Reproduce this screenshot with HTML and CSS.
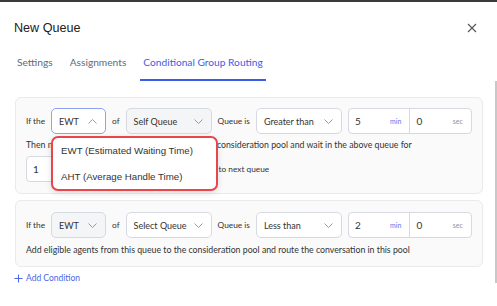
FILE: index.html
```html
<!DOCTYPE html>
<html lang="en">
<head>
    <meta charset="UTF-8">
    <meta name="viewport" content="width=device-width, initial-scale=1.0">
    <title>New Queue</title>
    <link rel="stylesheet" href="styles.css">
</head>
<body>
    <div class="topbar"></div>
    <div class="modal">
        <header class="modal-head">
            <h1>New Queue</h1>
            <button class="close" aria-label="Close">
                <svg width="10" height="10" viewBox="0 0 10 10"><path d="M1 1L9 9M9 1L1 9" stroke="#555" stroke-width="1.1" fill="none"/></svg>
            </button>
        </header>

        <nav class="tabs">
            <span class="tab">Settings</span>
            <span class="tab">Assignments</span>
            <span class="tab active">Conditional Group Routing</span>
        </nav>

        <div class="content">
            <div class="main">
                <div class="rule">
                    <div class="row">
                        <span class="label">If the</span>
                        <div class="select-wrap">
                            <div class="select metric focused">
                                <span>EWT</span>
                                <svg class="chev" width="9" height="5" viewBox="0 0 9 5"><path d="M0.5 4.5L4.5 0.5L8.5 4.5" stroke="#8a90a0" stroke-width="0.9" fill="none"/></svg>
                            </div>
                            <ul class="dropdown">
                                <li>EWT (Estimated Waiting Time)</li>
                                <li>AHT (Average Handle Time)</li>
                            </ul>
                        </div>
                        <span class="label">of</span>
                        <div class="select queue">
                            <span>Self Queue</span>
                            <svg class="chev" width="9" height="5" viewBox="0 0 9 5"><path d="M0.5 0.5L4.5 4.5L8.5 0.5" stroke="#8a90a0" stroke-width="0.9" fill="none"/></svg>
                        </div>
                        <span class="label">Queue is</span>
                        <div class="select compare">
                            <span>Greater than</span>
                            <svg class="chev" width="9" height="5" viewBox="0 0 9 5"><path d="M0.5 0.5L4.5 4.5L8.5 0.5" stroke="#8a90a0" stroke-width="0.9" fill="none"/></svg>
                        </div>
                        <div class="duration">
                            <div class="part"><span class="num">5</span><span class="unit min">min</span></div>
                            <div class="part"><span class="num">0</span><span class="unit">sec</span></div>
                        </div>
                    </div>
                    <p class="text">Then move eligible agents from this queue to this consideration pool and wait in the above queue for</p>
                    <div class="row">
                        <div class="box"><span class="num">1</span></div>
                        <div class="select small"><span>min</span></div>
                        <span class="label">before moving to next queue</span>
                    </div>
                </div>

                <div class="rule">
                    <div class="row">
                        <span class="label">If the</span>
                        <div class="select metric">
                            <span>EWT</span>
                            <svg class="chev" width="9" height="5" viewBox="0 0 9 5"><path d="M0.5 0.5L4.5 4.5L8.5 0.5" stroke="#8a90a0" stroke-width="0.9" fill="none"/></svg>
                        </div>
                        <span class="label">of</span>
                        <div class="select queue white">
                            <span>Select Queue</span>
                            <svg class="chev" width="9" height="5" viewBox="0 0 9 5"><path d="M0.5 0.5L4.5 4.5L8.5 0.5" stroke="#8a90a0" stroke-width="0.9" fill="none"/></svg>
                        </div>
                        <span class="label">Queue is</span>
                        <div class="select compare">
                            <span>Less than</span>
                            <svg class="chev" width="9" height="5" viewBox="0 0 9 5"><path d="M0.5 0.5L4.5 4.5L8.5 0.5" stroke="#8a90a0" stroke-width="0.9" fill="none"/></svg>
                        </div>
                        <div class="duration">
                            <div class="part"><span class="num">2</span><span class="unit min">min</span></div>
                            <div class="part"><span class="num">0</span><span class="unit">sec</span></div>
                        </div>
                    </div>
                    <p class="text">Add eligible agents from this queue to the consideration pool and route the conversation in this pool</p>
                </div>

                <a class="add" href="#">
                    <svg width="9" height="9" viewBox="0 0 9 9"><path d="M4.5 0.5V8.5M0.5 4.5H8.5" stroke="#4a67e8" stroke-width="1" fill="none"/></svg>
                    Add Condition
                </a>
            </div>
            <div class="scrollbar"></div>
        </div>
    </div>
</body>
</html>
```

FILE: styles.css
```css
* {
    margin: 0;
    padding: 0;
    box-sizing: border-box;
}

body {
    font-family: 'Lato', sans-serif;
    background: #fff;
    color: #333;
    width: 497px;
    height: 306px;
    overflow: hidden;
}

.topbar {
    height: 2px;
    background: #3a3a3a;
}

.modal {
    display: flex;
    flex-direction: column;
}

.modal-head {
    display: flex;
    justify-content: space-between;
    align-items: center;
    height: 52px;
    padding: 0 20px 0 14px;
}

.modal-head h1 {
    font-family: 'Liberation Sans', Arial, sans-serif;
    font-weight: 400;
    font-size: 12.6px;
    color: #222;
}

.close {
    background: none;
    border: none;
    display: flex;
}

.tabs {
    display: flex;
    padding-left: 14px;
    height: 27px;
}

.tab {
    font-size: 10.2px;
    color: #636a78;
    padding: 2px 3px 0;
    height: 27px;
    margin-right: 11px;
    white-space: nowrap;
}

.tab.active {
    color: #3d5ce8;
    border-bottom: 2px solid #3d5ce8;
}

.content {
    display: flex;
    flex: 1;
    height: 225px;
}

.main {
    flex: 1;
    padding: 16px 12px 0 15px;
}

.scrollbar {
    width: 4px;
    background: #c8c8c8;
}

.rule {
    background: #fafafa;
    border: 1px solid #e9eaee;
    border-radius: 6px;
    padding: 10px 10px 11px;
    margin-bottom: 6px;
}

.rule + .rule {
    padding-top: 11px;
    padding-bottom: 11px;
}

.rule + .rule .text {
    margin: 6px 0 0;
}

.row {
    display: flex;
    align-items: center;
    gap: 6px;
}

.label {
    font-size: 8.3px;
    color: #333;
    white-space: nowrap;
}

.text {
    font-size: 8.75px;
    color: #333;
    line-height: 11px;
    margin: 5px 0 6px;
    white-space: nowrap;
}

.select-wrap {
    position: relative;
}

.select {
    display: flex;
    align-items: center;
    justify-content: space-between;
    height: 26px;
    border: 1px solid #d6d9e1;
    border-radius: 5px;
    background: #fff;
    padding: 0 8px 0 7px;
    font-size: 9px;
    color: #333;
    white-space: nowrap;
}

.select.metric {
    width: 55px;
    background: #f4f5f7;
}

.select.focused {
    border-color: #8ea2f2;
    background: #fff;
}

.select.queue {
    width: 86px;
    background: #f4f5f7;
}

.select.queue.white {
    background: #fff;
}

.select.compare {
    width: 86px;
}

.select.small {
    width: 86px;
}

.duration {
    display: flex;
    width: 124px;
    height: 26px;
    border: 1px solid #d6d9e1;
    border-radius: 4px;
    background: #fff;
}

.part {
    flex: 1;
    display: flex;
    align-items: center;
    justify-content: space-between;
    padding: 0 8px 0 6px;
}

.part + .part {
    border-left: 1px solid #d6d9e1;
}

.num {
    font-size: 10px;
    color: #333;
}

.unit {
    font-size: 7px;
    color: #8b92a2;
}

.unit.min {
    color: #5a78e6;
}

.box {
    display: flex;
    align-items: center;
    width: 40px;
    height: 26px;
    border: 1px solid #d6d9e1;
    border-radius: 4px;
    background: #fff;
    padding-left: 6px;
}

.dropdown {
    position: absolute;
    top: 28px;
    left: 0;
    width: 167px;
    height: 55px;
    list-style: none;
    background: #fff;
    border: 2.5px solid #e8464b;
    border-radius: 7px;
    box-shadow: 0 2px 6px rgba(0, 0, 0, 0.12);
    z-index: 2;
}

.dropdown li {
    font-family: 'Liberation Sans', Arial, sans-serif;
    font-size: 9.7px;
    color: #333;
    height: 26px;
    line-height: 26px;
    padding-left: 8px;
    white-space: nowrap;
}

.add {
    display: flex;
    align-items: center;
    gap: 3px;
    font-size: 8.5px;
    color: #4a67e8;
    text-decoration: none;
    margin-left: -1px;
}
```
